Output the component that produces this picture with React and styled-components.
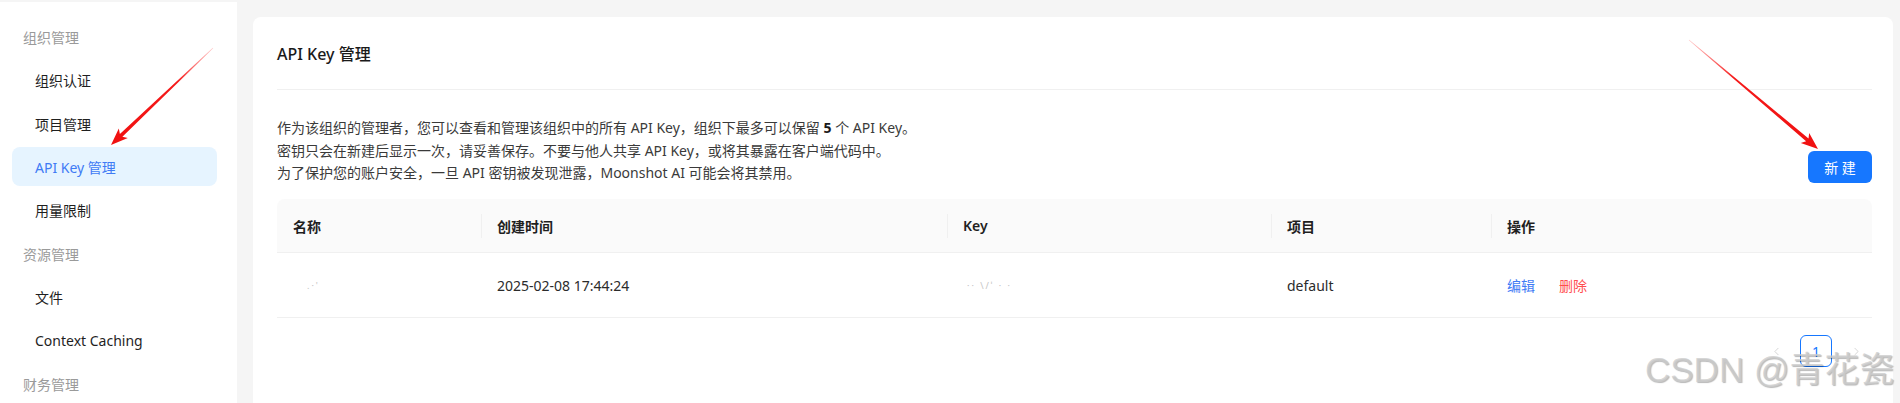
import React from 'react';
import styled, { createGlobalStyle } from 'styled-components';
import { ChevronLeft, ChevronRight } from 'lucide-react';

const GlobalStyle = createGlobalStyle`
  * { box-sizing: border-box; }
  html, body {
    margin: 0;
    padding: 0;
    height: 403px;
    overflow: hidden;
    background: #f5f5f5;
  }
  body {
    font-family: "Noto Sans", "Noto Sans CJK SC", sans-serif;
    font-size: 14px;
    color: rgba(0, 0, 0, 0.88);
  }
`;

const Page = styled.div`
  position: relative;
  display: flex;
  height: 403px;
  padding-top: 2px;
  background: #f5f5f5;
  overflow: hidden;
`;

const Sidebar = styled.nav`
  width: 237px;
  flex-shrink: 0;
  background: #fff;
  padding: 15.5px 20px 0 12px;
  display: flex;
  flex-direction: column;
  gap: 4.5px;
`;

const GroupTitle = styled.div`
  height: 39px;
  display: flex;
  align-items: center;
  padding-left: 11px;
  color: #9a9a9a;
  font-size: 14px;
`;

const MenuItem = styled.div`
  height: 39px;
  display: flex;
  align-items: center;
  padding-left: 23px;
  border-radius: 8px;
  font-size: 14px;
  color: ${p => (p.$active ? '#3f7bf5' : '#1f1f1f')};
  background: ${p => (p.$active ? '#e6f4ff' : 'transparent')};
`;

const Main = styled.main`
  flex: 1;
  padding: 15px 7px 0 16px;
`;

const Card = styled.section`
  background: #fff;
  border-radius: 8px 8px 0 0;
  padding: 0 21px 0 24px;
  min-height: 500px;
`;

const CardHeader = styled.div`
  height: 73px;
  display: flex;
  align-items: center;
  border-bottom: 1px solid #f0f0f0;
  font-size: 16px;
  font-weight: 500;
  color: #1a1a1a;
`;

const Intro = styled.div`
  margin-top: 27px;
  display: flex;
  justify-content: space-between;
  align-items: flex-end;
`;

const Description = styled.div`
  line-height: 22.5px;
  color: #3a3a3a;

  b {
    font-weight: 700;
    color: #1a1a1a;
  }
`;

const PrimaryButton = styled.button`
  width: 64px;
  height: 32px;
  margin-bottom: 1.5px;
  border: none;
  border-radius: 6px;
  background: #1677ff;
  color: #fff;
  font-family: inherit;
  font-size: 14px;
  cursor: pointer;
`;

const Table = styled.div`
  margin-top: 14.5px;
`;

const Row = styled.div`
  display: grid;
  grid-template-columns: 204px 466px 324px 220px 1fr;
  height: ${p => (p.$head ? '54px' : '65px')};
  align-items: center;
  background: ${p => (p.$head ? '#fafafa' : '#fff')};
  border-bottom: 1px solid #f0f0f0;
  border-radius: ${p => (p.$head ? '8px 8px 0 0' : '0')};
`;

const HeadCell = styled.div`
  position: relative;
  padding: 0 16px;
  font-weight: 600;
  color: #1f1f1f;

  &:not(:first-child)::before {
    content: '';
    position: absolute;
    left: 0;
    top: 50%;
    width: 1px;
    height: 24px;
    transform: translateY(-50%);
    background: #f0f0f0;
  }
`;

const Cell = styled.div`
  padding: 0 16px;
  color: #2b2b2b;
  display: flex;
  gap: 24px;
`;

const Redacted = styled.span`
  color: #c4c4c4;
  font-size: 9px;
  letter-spacing: 2px;
  padding-left: ${p => p.$indent || 0}px;
`;

const LinkAction = styled.a`
  color: ${p => (p.$danger ? '#ff4d4f' : '#3f7bf5')};
  cursor: pointer;
`;

const Pagination = styled.div`
  margin-top: 17px;
  display: flex;
  justify-content: flex-end;
  gap: 8px;
`;

const PageArrow = styled.span`
  width: 32px;
  height: 32px;
  display: flex;
  align-items: center;
  justify-content: center;
  color: #c9c9c9;
`;

const PageItem = styled.span`
  width: 32px;
  height: 32px;
  display: flex;
  align-items: center;
  justify-content: center;
  border: 1px solid #1677ff;
  border-radius: 6px;
  color: #1677ff;
  font-size: 14px;
`;

const Overlay = styled.svg`
  position: absolute;
  left: 0;
  top: 0;
  pointer-events: none;
`;

const Watermark = styled.div`
  position: absolute;
  left: 1645px;
  top: 352px;
  font-family: "Liberation Sans", "Noto Sans CJK SC", sans-serif;
  font-size: 35px;
  line-height: 1;
  white-space: nowrap;
  color: rgba(205, 205, 205, 0.8);
  text-shadow: 1px 1px 1px rgba(0, 0, 0, 0.28);
  pointer-events: none;
`;

const arrowPoints = ([tx, ty], [px, py]) => {
  const dx = px - tx;
  const dy = py - ty;
  const len = Math.hypot(dx, dy);
  const ux = dx / len;
  const uy = dy / len;
  const nx = -uy;
  const ny = ux;
  const at = (d, w) => [px - ux * d + nx * w, py - uy * d + ny * w];
  return [
    at(len, 0.3), at(14, 1.8), at(17, 6.5), at(0, 0),
    at(17, -6.5), at(14, -1.8), at(len, -0.3),
  ].map(p => p.map(v => v.toFixed(1)).join(',')).join(' ');
};

const arrows = [
  { id: 'a1', tail: [213, 48], tip: [111, 145] },
  { id: 'a2', tail: [1689, 40], tip: [1818, 149] },
];

const menu = [
  { group: '组织管理' },
  { label: '组织认证' },
  { label: '项目管理' },
  { label: 'API Key 管理', active: true },
  { label: '用量限制' },
  { group: '资源管理' },
  { label: '文件' },
  { label: 'Context Caching' },
  { group: '财务管理' },
];

const columns = ['名称', '创建时间', 'Key', '项目', '操作'];

export default function App() {
  return (
    <>
      <GlobalStyle />
      <Page>
        <Sidebar>
          {menu.map(m =>
            m.group
              ? <GroupTitle key={m.group}>{m.group}</GroupTitle>
              : <MenuItem key={m.label} $active={m.active}>{m.label}</MenuItem>
          )}
        </Sidebar>

        <Main>
          <Card>
            <CardHeader>API Key 管理</CardHeader>
            <Intro>
              <Description>
                <div>作为该组织的管理者，您可以查看和管理该组织中的所有 API Key，组织下最多可以保留 <b>5</b> 个 API Key。</div>
                <div>密钥只会在新建后显示一次，请妥善保存。不要与他人共享 API Key，或将其暴露在客户端代码中。</div>
                <div>为了保护您的账户安全，一旦 API 密钥被发现泄露，Moonshot AI 可能会将其禁用。</div>
              </Description>
              <PrimaryButton>新 建</PrimaryButton>
            </Intro>

            <Table>
              <Row $head>
                {columns.map(c => <HeadCell key={c}>{c}</HeadCell>)}
              </Row>
              <Row>
                <Cell><Redacted $indent={14}>.·'</Redacted></Cell>
                <Cell>2025-02-08 17:44:24</Cell>
                <Cell><Redacted $indent={4}>·· \/ˈ  ·  ·</Redacted></Cell>
                <Cell>default</Cell>
                <Cell>
                  <LinkAction>编辑</LinkAction>
                  <LinkAction $danger>删除</LinkAction>
                </Cell>
              </Row>
            </Table>

            <Pagination>
              <PageArrow><ChevronLeft size={13} strokeWidth={1.4} /></PageArrow>
              <PageItem>1</PageItem>
              <PageArrow><ChevronRight size={13} strokeWidth={1.4} /></PageArrow>
            </Pagination>
          </Card>
        </Main>

        <Overlay width="1900" height="403" viewBox="0 0 1900 403">
          <defs>
            {arrows.map(a => (
              <linearGradient
                key={a.id}
                id={`grad-${a.id}`}
                gradientUnits="userSpaceOnUse"
                x1={a.tail[0]} y1={a.tail[1]} x2={a.tip[0]} y2={a.tip[1]}
              >
                <stop offset="0" stopColor="#ff3030" stopOpacity="0.25" />
                <stop offset="0.35" stopColor="#f51a1a" stopOpacity="1" />
                <stop offset="1" stopColor="#f01010" stopOpacity="1" />
              </linearGradient>
            ))}
          </defs>
          {arrows.map(a => (
            <polygon key={a.id} points={arrowPoints(a.tail, a.tip)} fill={`url(#grad-${a.id})`} />
          ))}
        </Overlay>

        <Watermark>CSDN @青花瓷</Watermark>
      </Page>
    </>
  );
}
